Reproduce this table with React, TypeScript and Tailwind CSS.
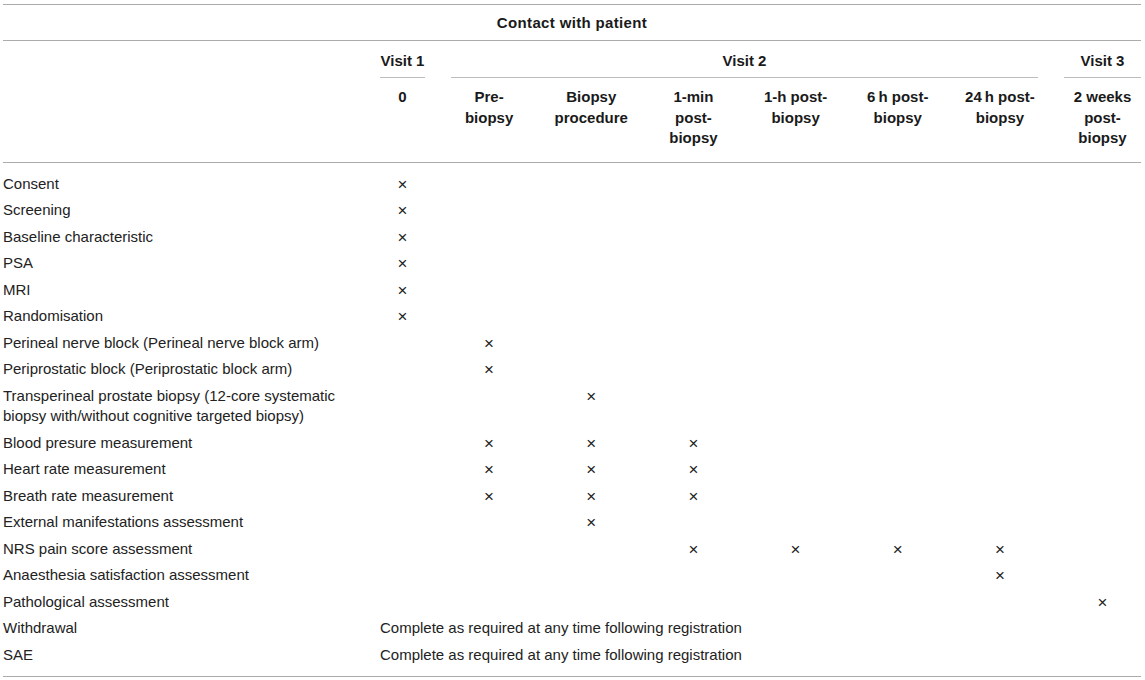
import React from "react";

const cols = "grid grid-cols-[364px_71px_repeat(6,minmax(0,1fr))_90px]";

type Row = { label: React.ReactNode; marks?: number[]; span?: string };

const rows: Row[] = [
  { label: "Consent", marks: [0] },
  { label: "Screening", marks: [0] },
  { label: "Baseline characteristic", marks: [0] },
  { label: "PSA", marks: [0] },
  { label: "MRI", marks: [0] },
  { label: "Randomisation", marks: [0] },
  { label: "Perineal nerve block (Perineal nerve block arm)", marks: [1] },
  { label: "Periprostatic block (Periprostatic block arm)", marks: [1] },
  {
    label: (
      <>
        Transperineal prostate biopsy (12-core systematic
        <br />
        biopsy with/without cognitive targeted biopsy)
      </>
    ),
    marks: [2],
  },
  { label: "Blood presure measurement", marks: [1, 2, 3] },
  { label: "Heart rate measurement", marks: [1, 2, 3] },
  { label: "Breath rate measurement", marks: [1, 2, 3] },
  { label: "External manifestations assessment", marks: [2] },
  { label: "NRS pain score assessment", marks: [3, 4, 5, 6] },
  { label: "Anaesthesia satisfaction assessment", marks: [6] },
  { label: "Pathological assessment", marks: [7] },
  { label: "Withdrawal", span: "Complete as required at any time following registration" },
  { label: "SAE", span: "Complete as required at any time following registration" },
];

const subHeads: React.ReactNode[] = [
  "0",
  <>Pre-<br />biopsy</>,
  <>Biopsy<br />procedure</>,
  <>1-min<br />post-<br />biopsy</>,
  <>1-h post-<br />biopsy</>,
  <>6{"\u2009"}h post-<br />biopsy</>,
  <>24{"\u2009"}h post-<br />biopsy</>,
  <>2 weeks<br />post-<br />biopsy</>,
];

export default function App() {
  return (
    <div className="w-[1145px] h-[680px] bg-white pt-[4px] pl-[3px] font-['Liberation_Sans',Arial,sans-serif] text-[15px] leading-[20.5px] text-[#222]">
      <div className="w-[1138px] border-t border-b border-[#ababab]">
        {/* Header */}
        <div className="text-center font-bold text-[#1a1a1a] tracking-[0.35px] pt-[8px] pb-[6px] border-b border-[#ababab]">
          Contact with patient
        </div>
        <div className={`${cols} font-bold text-center text-[#1a1a1a]`}>
          <div />
          <div className="px-[13px] pt-[10px]">
            <div className="pb-[5.5px] border-b border-[#bdbdbd]">Visit 1</div>
          </div>
          <div className="col-span-6 px-[13px] pt-[10px]">
            <div className="pb-[5.5px] border-b border-[#bdbdbd]">Visit 2</div>
          </div>
          <div className="pl-[13px] pt-[10px]">
            <div className="pb-[5.5px] border-b border-[#bdbdbd]">Visit 3</div>
          </div>
        </div>
        <div className={`${cols} font-bold text-center text-[#1a1a1a] pt-[9.5px] pb-[13px] border-b border-[#ababab]`}>
          <div />
          {subHeads.map((h, i) => (
            <div key={i} className={i === 7 ? "pl-[13px]" : "px-[13px]"}>
              {h}
            </div>
          ))}
        </div>
        {/* Body */}
        <div className="pt-[8px] pb-[8px]">
          {rows.map((r, ri) => (
            <div key={ri} className={`${cols} py-[3px]`}>
              <div>{r.label}</div>
              {r.span ? (
                <div className="col-span-8 pl-[13px] text-left">{r.span}</div>
              ) : (
                Array.from({ length: 8 }).map((_, ci) => (
                  <div
                    key={ci}
                    className={`text-center text-[17px] pt-[2px] leading-[18.5px] ${ci === 7 ? "pl-[13px]" : "px-[13px]"}`}
                  >
                    {r.marks?.includes(ci) ? "×" : ""}
                  </div>
                ))
              )}
            </div>
          ))}
        </div>
      </div>
    </div>
  );
}
